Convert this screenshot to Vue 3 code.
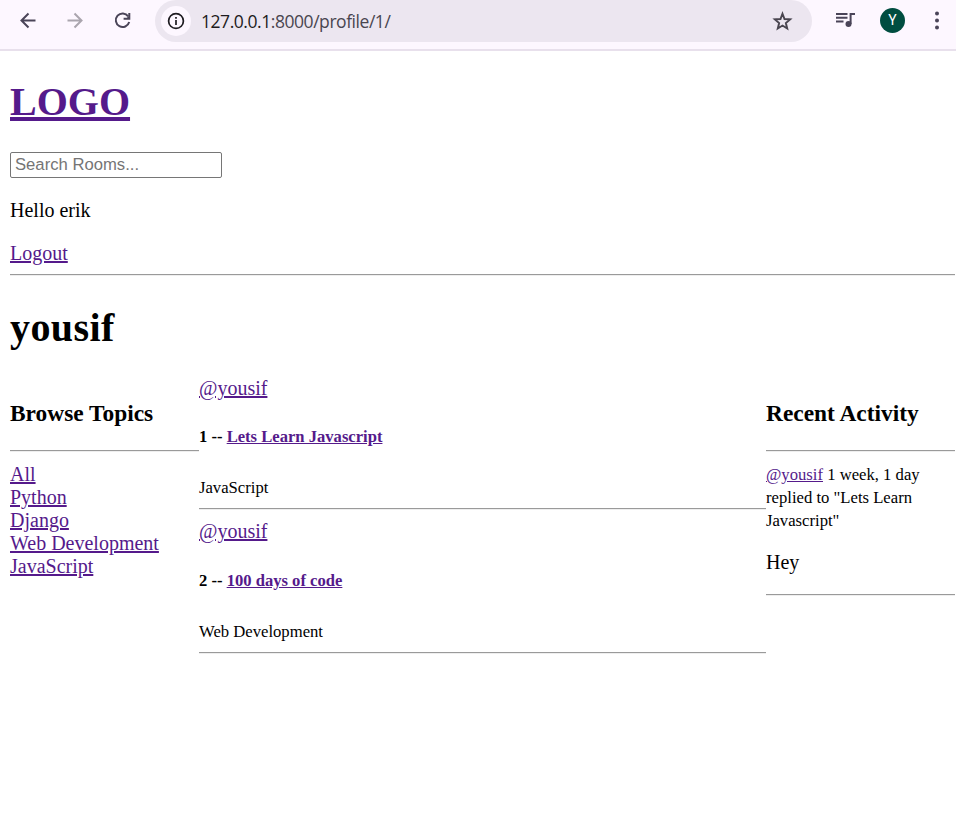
<script setup>
const topics = ['All', 'Python', 'Django', 'Web Development', 'JavaScript']
const rooms = [
  { id: 1, host: 'yousif', name: 'Lets Learn Javascript', topic: 'JavaScript' },
  { id: 2, host: 'yousif', name: '100 days of code', topic: 'Web Development' },
]
</script>

<template>
  <div class="window">
    <header class="toolbar">
      <svg class="icon back" viewBox="0 0 24 24"><path d="M12.5 5.500 5.500 12.500l7 7M5.800 12.500H19.500" /></svg>
      <svg class="icon forward" viewBox="0 0 24 24"><path d="M11.500 5.500 18.500 12.500l-7 7M18.200 12.500H4.500" /></svg>
      <svg class="icon reload" viewBox="0 0 24 24"><path d="M18.200 8.300A6.800 6.800 0 1 0 19.200 14" /><path class="solid" d="M20.300 5v6.700h-6.700v-1.900h3.300L18.300 8.400V5z" /></svg>
      <div class="address">
        <span class="info">
          <svg viewBox="0 0 24 24"><circle cx="12" cy="12" r="7.400" /><path d="M12 11v5M12 8v1.800" /></svg>
        </span>
        <span class="url"><span class="host">127.0.0.1</span>:8000/profile/1/</span>
        <svg class="star" viewBox="0 0 24 24"><path d="m12 3.900 2.100 5.500 5.900.4-4.500 3.800 1.400 5.700-4.900-3.100-4.900 3.100 1.400-5.700L4 9.800l5.900-.4z" /></svg>
      </div>
      <svg class="media" viewBox="0 0 22 22"><path d="M1 6h11.500M1 9.700h11.500M1 13.500h7.500M15.600 16V6H20" /><circle cx="13.500" cy="16" r="3" /></svg>
      <span class="avatar">Y</span>
      <svg class="more" viewBox="0 0 6 24"><circle cx="3" cy="5.500" r="2" /><circle cx="3" cy="12.500" r="2" /><circle cx="3" cy="19.500" r="2" /></svg>
    </header>

    <main class="page">
      <h1 class="logo"><a href="#">LOGO</a></h1>
      <form class="search" @submit.prevent>
        <input type="text" placeholder="Search Rooms..." />
      </form>
      <p class="hello">Hello erik</p>
      <div class="line"><a href="#">Logout</a></div>
      <hr class="divider" />
      <h1 class="user">yousif</h1>

      <div class="columns">
        <aside>
          <h3>Browse Topics</h3>
          <hr />
          <div v-for="t in topics" :key="t" class="line"><a href="#">{{ t }}</a></div>
        </aside>

        <section>
          <article v-for="r in rooms" :key="r.id">
            <div class="line"><a href="#">@{{ r.host }}</a></div>
            <h5>{{ r.id }} -- <a href="#">{{ r.name }}</a></h5>
            <div class="small">{{ r.topic }}</div>
            <hr class="divider" />
          </article>
        </section>

        <aside>
          <h3>Recent Activity</h3>
          <hr />
          <div class="small"><a href="#">@yousif</a> 1 week, 1 day replied to "Lets Learn Javascript"</div>
          <p class="message">Hey</p>
          <hr />
        </aside>
      </div>
    </main>
  </div>
</template>

<style>
body {
  margin: 0;
  background: #fff;
}
</style>

<style scoped>
.window {
  height: 831px;
  overflow: hidden;
  background: #fff;
}

.toolbar {
  display: flex;
  box-sizing: border-box;
  height: 51px;
  padding-left: 16px;
  border-bottom: 2px solid #e8e0ec;
  background: #fdf7ff;
}
svg {
  display: block;
  flex: none;
  fill: none;
  stroke: #4a4458;
  stroke-width: 2;
}
.icon {
  width: 24px;
  height: 24px;
  margin: 8px 23px 0 0;
}
.forward {
  stroke: #aaa5ae;
}
.reload {
  margin-right: 21px;
}
.reload .solid {
  fill: #4a4458;
  stroke: none;
}
.address {
  display: flex;
  align-items: center;
  flex: none;
  box-sizing: border-box;
  width: 657px;
  height: 42px;
  padding: 0 18px 0 6px;
  border-radius: 21px;
  background: #ece6f0;
}
.info {
  display: flex;
  align-items: center;
  justify-content: center;
  width: 30px;
  height: 30px;
  border-radius: 50%;
  background: #fdf7ff;
}
.info svg {
  width: 24px;
  height: 24px;
  stroke: #1d1b20;
  stroke-width: 1.7;
}
.url {
  flex: 1;
  margin-left: 10px;
  color: #49454f;
  font: 17.5px/24px "Open Sans", sans-serif;
  letter-spacing: -0.45px;
}
.host {
  color: #1d1b20;
}
.star {
  width: 23px;
  height: 23px;
  stroke: #49454f;
}
.media {
  width: 22px;
  height: 22px;
  margin: 8px 0 0 23px;
}
.media circle {
  fill: #4a4458;
  stroke: none;
}
.avatar {
  flex: none;
  width: 25px;
  height: 25px;
  margin: 8px 0 0 23px;
  border-radius: 50%;
  background: #004d40;
  color: #fff;
  font: 14px/25px Roboto, sans-serif;
  text-align: center;
}
.more {
  width: 6px;
  height: 24px;
  margin: 8px 0 0 29px;
}
.more circle {
  fill: #4a4458;
  stroke: none;
}

.page {
  width: 945px;
  padding: 28px 0 0 10px;
  color: #000;
  font: 20px/23px "Liberation Serif", "Times New Roman", serif;
}
a {
  color: #551a8b;
  text-decoration: underline;
}
.line a {
  text-decoration-thickness: 2px;
}
.logo a {
  text-decoration-thickness: 4px;
}
h1 {
  margin: 0;
  font-size: 40px;
  line-height: 46px;
}
.search {
  height: 26px;
  margin: 27px 0 21px;
}
input {
  display: block;
  box-sizing: border-box;
  width: 212px;
  height: 26px;
  margin: 0;
  padding: 0 4px;
  border: 1px solid #767676;
  border-radius: 2px;
  background: #fff;
  font: 16.67px/22px "Liberation Sans", Arial, sans-serif;
}
input::placeholder {
  color: #757575;
  opacity: 1;
}
.hello {
  margin: 0 0 20px;
}
hr {
  height: 0;
  margin: 10px 0 11px;
  border: 0;
  border-top: 1px solid #9a9a9a;
  border-bottom: 1px solid #eee;
}
.divider {
  margin: 9px 0 10px;
}
.user {
  margin: 29px 0 26px;
  letter-spacing: 0.4px;
}
.columns {
  display: grid;
  grid-template-columns: 1fr 3fr 1fr;
}
h3 {
  margin: 23px 0 24px;
  font-size: 23.4px;
  line-height: 26px;
}
h5 {
  margin: 27px 0 30px;
  font-size: 16.6px;
  line-height: 19px;
}
article + article h5 {
  margin-top: 28px;
}
.small {
  font-size: 16.67px;
}
.message {
  margin: 19px 0 20px;
}
</style>
